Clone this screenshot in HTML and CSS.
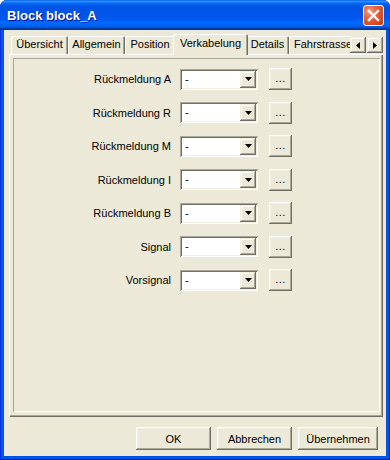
FILE: index.html
```html
<!DOCTYPE html>
<html lang="de">
<head>
<meta charset="utf-8">
<title>Block block_A</title>
<link rel="stylesheet" href="styles.css">
</head>
<body>
<div class="window">
  <div class="titlebar">
    <span class="title">Block block_A</span>
    <div class="close">
      <svg width="13" height="13" viewBox="0 0 13 13"><path d="M2 2 L11 11 M11 2 L2 11" stroke="#fff" stroke-width="2.4" stroke-linecap="square"/></svg>
    </div>
  </div>
  <div class="client">
    <div class="tabstrip">
      <div class="tabs">
        <div class="tab w1">Übersicht</div>
        <div class="tab w2">Allgemein</div>
        <div class="tab w3">Position</div>
        <div class="tab w4 active">Verkabelung</div>
        <div class="tab w5">Details</div>
        <div class="tab w6">Fahrstrasse</div>
      </div>
      <div class="scrollers">
        <div class="sbtn"><svg width="4" height="7" viewBox="0 0 4 7"><path d="M4 0 L0 3.5 L4 7 Z" fill="#000"/></svg></div>
        <div class="sbtn"><svg width="4" height="7" viewBox="0 0 4 7"><path d="M0 0 L4 3.5 L0 7 Z" fill="#000"/></svg></div>
      </div>
    </div>
    <div class="panel">
      <div class="frame">
        <div class="rows">
          <span class="label">Rückmeldung A</span>
          <div class="combo"><span class="val">-</span><span class="drop"><svg width="7" height="4" viewBox="0 0 7 4"><path d="M0 0 H7 L3.5 4 Z" fill="#000"/></svg></span></div>
          <div class="btn small">...</div>

          <span class="label">Rückmeldung R</span>
          <div class="combo"><span class="val">-</span><span class="drop"><svg width="7" height="4" viewBox="0 0 7 4"><path d="M0 0 H7 L3.5 4 Z" fill="#000"/></svg></span></div>
          <div class="btn small">...</div>

          <span class="label">Rückmeldung M</span>
          <div class="combo"><span class="val">-</span><span class="drop"><svg width="7" height="4" viewBox="0 0 7 4"><path d="M0 0 H7 L3.5 4 Z" fill="#000"/></svg></span></div>
          <div class="btn small">...</div>

          <span class="label">Rückmeldung I</span>
          <div class="combo"><span class="val">-</span><span class="drop"><svg width="7" height="4" viewBox="0 0 7 4"><path d="M0 0 H7 L3.5 4 Z" fill="#000"/></svg></span></div>
          <div class="btn small">...</div>

          <span class="label">Rückmeldung B</span>
          <div class="combo"><span class="val">-</span><span class="drop"><svg width="7" height="4" viewBox="0 0 7 4"><path d="M0 0 H7 L3.5 4 Z" fill="#000"/></svg></span></div>
          <div class="btn small">...</div>

          <span class="label">Signal</span>
          <div class="combo"><span class="val">-</span><span class="drop"><svg width="7" height="4" viewBox="0 0 7 4"><path d="M0 0 H7 L3.5 4 Z" fill="#000"/></svg></span></div>
          <div class="btn small">...</div>

          <span class="label">Vorsignal</span>
          <div class="combo"><span class="val">-</span><span class="drop"><svg width="7" height="4" viewBox="0 0 7 4"><path d="M0 0 H7 L3.5 4 Z" fill="#000"/></svg></span></div>
          <div class="btn small">...</div>
        </div>
      </div>
    </div>
    <div class="buttons">
      <div class="btn b-ok">OK</div>
      <div class="btn b-cancel">Abbrechen</div>
      <div class="btn b-apply">Übernehmen</div>
    </div>
  </div>
</div>
</body>
</html>
```

FILE: styles.css
```css
html, body {
  margin: 0;
  padding: 0;
  background: #ffffff;
}
body {
  font-family: "Liberation Sans", Arial, sans-serif;
  font-size: 11px;
  color: #000;
}
.window {
  width: 390px;
  height: 460px;
  box-sizing: border-box;
  border-radius: 7px 7px 0 0;
  background: #0055e5;
  box-shadow: inset 1px 0 #0831d9, inset -1px 0 #001ea0, inset 0 -1px #001ea0;
  overflow: hidden;
  display: flex;
  flex-direction: column;
}
.titlebar {
  height: 30px;
  flex: none;
  display: flex;
  align-items: center;
  justify-content: space-between;
  padding: 0 6px 0 7px;
  border-radius: 7px 7px 0 0;
  background: linear-gradient(to bottom, #0058ee 0%, #3593ff 4%, #288eff 6%, #127dff 8%, #036ffc 10%, #0262ee 14%, #0057e5 20%, #0054e3 24%, #0055eb 56%, #005bf5 66%, #026afe 76%, #0062ef 86%, #0052d6 92%, #0040ab 94%, #003092 100%);
}
.title {
  color: #fff;
  font-family: "Liberation Sans", Arial, sans-serif;
  font-weight: bold;
  font-size: 13px;
  text-shadow: 1px 1px #0f1089;
  padding-top: 1px;
}
.close {
  width: 21px;
  height: 21px;
  box-sizing: border-box;
  border: 1px solid #fff;
  border-radius: 3px;
  background: radial-gradient(circle at 30% 30%, #f4a08a 0%, #e8663f 35%, #db4a1f 70%, #c23510 100%);
  display: flex;
  align-items: center;
  justify-content: center;
  margin-top: 1px;
}
.client {
  flex: none;
  height: 426px;
  margin: 0 4px;
  background: #ece9d8;
  display: flex;
  flex-direction: column;
}
.tabstrip {
  height: 20px;
  margin-top: 5px;
  display: flex;
  align-items: flex-end;
  position: relative;
  z-index: 2;
}
.tabs {
  display: flex;
  align-items: flex-end;
  width: 339px;
  padding-left: 7px;
  height: 21px;
  overflow: hidden;
  flex: none;
}
.tab {
  height: 18px;
  box-sizing: border-box;
  flex: none;
  text-align: center;
  line-height: 17px;
  background: #ece9d8;
  border-radius: 2px 2px 0 0;
  box-shadow: inset 1px 1px #ffffff, inset -1px 0 #716f64, inset -2px 0 #aca899;
  white-space: nowrap;
  overflow: hidden;
  margin-bottom: 1px;
}
.tab.active {
  height: 21px;
  margin: 0 -2px 0 -2px;
  line-height: 18px;
  position: relative;
  z-index: 3;
  margin-bottom: 0;
}
.w1 { width: 57px; }
.w2 { width: 57px; }
.w3 { width: 50px; }
.w4 { width: 75px; }
.w5 { width: 43px; }
.w6 { width: 70px; text-align: left; padding-left: 5px; }
.scrollers {
  display: flex;
  gap: 1px;
  align-self: flex-start;
  margin-top: 2px;
}
.sbtn {
  width: 16px;
  height: 16px;
  box-sizing: border-box;
  background: #ece9d8;
  box-shadow: inset -1px -1px #716f64, inset 1px 1px #f1efe2, inset -2px -2px #aca899, inset 2px 2px #ffffff;
  display: flex;
  align-items: center;
  justify-content: center;
}
.panel {
  margin: -1px 0 0 5px;
  width: 374px;
  height: 363px;
  box-sizing: border-box;
  padding: 4px 3px 5px 4px;
  box-shadow: inset 1px 1px #ffffff, inset -1px -1px #716f64, inset -2px -2px #aca899;
  position: relative;
  z-index: 1;
}
.frame {
  height: 100%;
  box-sizing: border-box;
  box-shadow: inset 1px 1px #aca899, inset -1px -1px #ffffff;
  padding-top: 10px;
}
.rows {
  display: grid;
  grid-template-columns: 158px 78px 25px;
  column-gap: 9px;
  row-gap: 11.5px;
  align-items: center;
}
.label {
  text-align: right;
}
.combo {
  height: 21px;
  box-sizing: border-box;
  background: #fff;
  box-shadow: inset 1px 1px #aca899, inset -1px -1px #ffffff, inset 2px 2px #716f64, inset -2px -2px #f1efe2;
  display: flex;
  align-items: center;
  padding: 2px;
}
.val {
  flex: 1;
  padding-left: 3px;
  line-height: 17px;
}
.drop {
  width: 16px;
  height: 17px;
  box-sizing: border-box;
  background: #ece9d8;
  box-shadow: inset -1px -1px #716f64, inset 1px 1px #f1efe2, inset -2px -2px #aca899, inset 2px 2px #ffffff;
  display: flex;
  align-items: center;
  justify-content: center;
}
.btn {
  height: 23px;
  box-sizing: border-box;
  background: #ece9d8;
  box-shadow: inset -1px -1px #716f64, inset 1px 1px #ffffff, inset -2px -2px #aca899, inset 2px 2px #f1efe2;
  display: flex;
  align-items: center;
  justify-content: center;
}
.btn.small {
  height: 22px;
  margin-left: 2px;
  padding-bottom: 2px;
  letter-spacing: 0.5px;
}
.buttons {
  display: flex;
  justify-content: flex-end;
  gap: 6px;
  margin-top: 10px;
  padding-right: 8px;
}
.b-ok { width: 75px; }
.b-cancel { width: 75px; }
.b-apply { width: 80px; }
```
